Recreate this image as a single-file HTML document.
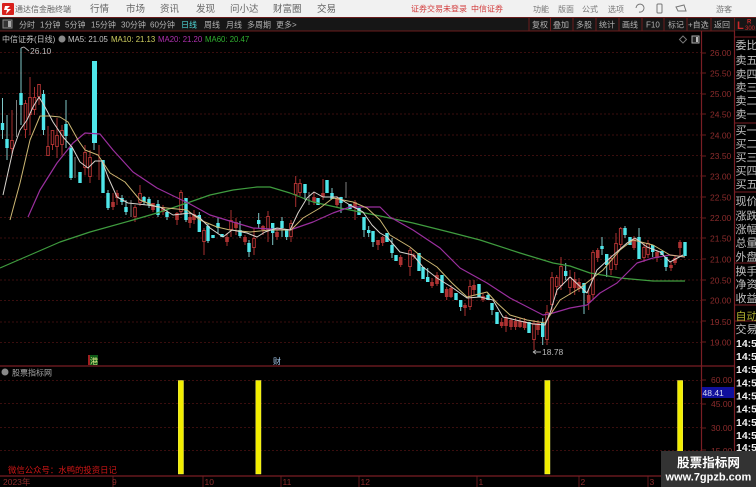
<!DOCTYPE html>
<html><head><meta charset="utf-8"><title>通达信金融终端</title>
<style>
html,body{margin:0;padding:0;background:#000;width:756px;height:487px;overflow:hidden}
svg{display:block;filter:blur(.35px)}
text{font-family:"Liberation Sans","Noto Sans CJK SC",sans-serif;white-space:pre}
.m{font-size:9.5px;fill:#666}
.s{font-size:8px;fill:#777}
.t{font-size:8px;fill:#b4b4b4}
.a{font-size:8.5px;fill:#8c2c2c}
.r{font-size:11px;fill:#c0c0c0}
.k{font-size:10.5px;fill:#f0f0f0;font-weight:bold}
</style></head><body>
<svg width="756" height="487" viewBox="0 0 756 487" xmlns="http://www.w3.org/2000/svg">
<rect width="756" height="487" fill="#000"/>
<!-- title bar -->
<rect width="756" height="17" fill="#f1f1f1"/>
<rect x="2" y="3" width="12" height="12" rx="1" fill="#d8201c"/>
<path d="M5 6l5 0-3 3 4 0-5 5 1-4-3 0z" fill="#fff"/>
<text x="15" y="12" class="s" style="fill:#666">通达信金融终端</text>
<g class="m"><text x="90" y="12">行情</text><text x="126" y="12">市场</text><text x="160" y="12">资讯</text><text x="196" y="12">发现</text><text x="230" y="12">问小达</text><text x="273" y="12">财富圈</text><text x="317" y="12">交易</text></g>
<text x="411" y="11.500" style="font-size:8px;fill:#d23c3c">证券交易未登录</text>
<text x="471" y="11.500" style="font-size:8px;fill:#d23c3c">中信证券</text>
<g class="s"><text x="533" y="12">功能</text><text x="558" y="12">版面</text><text x="582" y="12">公式</text><text x="608" y="12">选项</text><text x="716" y="12">游客</text></g>
<g fill="none" stroke="#777" stroke-width="1"><path d="M636 8a4 4 0 1 1 3 4"/><rect x="657" y="4" width="5" height="9" rx="1"/><path d="M676 7l8-2 2 6h-8z"/></g>
<!-- toolbar -->
<rect y="17" width="756" height="14" fill="#161616"/>
<path d="M0 17.500H756M0 31H735" stroke="#6a1c1c" stroke-width="1"/>
<rect x="3" y="20" width="9" height="8" fill="#333" stroke="#888"/><rect x="8" y="21" width="3" height="6" fill="#aaa"/>
<g class="t"><text x="19" y="27.500">分时</text><text x="40" y="27.500">1分钟</text><text x="65" y="27.500">5分钟</text><text x="91" y="27.500">15分钟</text><text x="121" y="27.500">30分钟</text><text x="150" y="27.500">60分钟</text><text x="181" y="27.500" style="fill:#4fd6d6">日线</text><text x="204" y="27.500">周线</text><text x="226" y="27.500">月线</text><text x="247" y="27.500">多周期</text><text x="276" y="27.500">更多</text><text x="292" y="27.500">&gt;</text>
<text x="532" y="27.500">复权</text><text x="553" y="27.500">叠加</text><text x="576" y="27.500">多股</text><text x="599" y="27.500">统计</text><text x="622" y="27.500">画线</text><text x="646" y="27.500">F10</text><text x="668" y="27.500">标记</text><text x="688" y="27.500">+自选</text><text x="714" y="27.500">返回</text></g>
<path d="M529 18V31M550.500 18V31M573 18V31M596 18V31M619 18V31M642 18V31M664 18V31M687 18V31M711 18V31M734.500 18V31" stroke="#6a1c1c"/>
<text x="737" y="29" style="font-size:11px;font-weight:bold;fill:#c92a2a">L</text>
<text x="747" y="23.500" style="font-size:6px;font-weight:bold;fill:#c92a2a">R</text>
<text x="745" y="30" style="font-size:6px;fill:#c92a2a">300</text>
<!-- grid -->
<g stroke="#3a0e0e" stroke-width="1" stroke-dasharray="2 2">
<path d="M0 52.500H701M0 73H701M0 93.500H701M0 114H701M0 135H701M0 155.500H701M0 176H701M0 197H701M0 217.500H701M0 238H701M0 259.500H701M0 280H701M0 300.500H701M0 322H701M0 342.500H701"/>
<path d="M0 380.500H701M0 403.500H701M0 427.500H701M0 450.500H701"/>
</g>
<!-- frame -->
<path d="M0 366H735M0 476H735M701.500 31V476M734.500 31V487" stroke="#7a1e24" stroke-width="1.200" fill="none"/>
<path d="M701 53H706M701 73H706M701 94H706M701 114H706M701 135H706M701 156H706M701 176H706M701 197H706M701 218H706M701 238H706M701 259H706M701 280H706M701 300H706M701 321H706M701 342H706M701 380H706M701 404H706M701 428H706M701 450H706" stroke="#6a1c1c"/>
<!-- candles: wicks -->
<path fill="none" stroke="#7e7e7e" stroke-width="1" d="M16.500 100V137M75 157V178M309 192V205M346 182V198M131 200V217"/>
<path fill="none" stroke="#a83030" stroke-width="1" d="M12 110V155M25.500 100V138M30 77V135M34.500 87V115M39 84V105M48 126V156M52.500 130V150M57 118V158M62 125V155M85 145V175M90 150V183M99 145V180M113 193V210M117 190V205M135 205V222M140 185V206M153 203V212M163 205V215M177 212V225M181 190V215M190 212V228M194 210V224M204 228V255M227 233V246M231 210V237M236 218V235M245 235V245M254 228V255M263 225V235M268 211V242M277 228V240M291 220V242M295.700 176V207M300 179V196M314 192V205M323 179V200M337 196V208M355 200V220M378 240V250M382.700 236V246M400.700 255V267M410 248V276M414 253V259M432 278V288M437 272V286M446.700 287V300M451 285V298M465 303V316M470 280V310M474 280V295M483 293V302M501.700 318V328M506 315V332M511 318V330M515.600 318V330M520 318V328M524.600 318V330M534 320V350M538 320V335M547 305V345M552 272V312M556.700 275V295M561 257V290M570 270V295M574.700 272V295M579 278V292M588.700 290V310M593 250V300M597.700 248V262M611 255V275M616 233V270M620.700 227V250M634 236V250M644 243V262M648 240V258M657 250V262M671 262V271M675 255V265M680 240V257"/>
<path fill="none" stroke="#7fc8c8" stroke-width="1" d="M2.500 98V139M7 115V160M21 48V125M43.500 90V135M66 100V148M71 145V180M80 172V183M94 61V150M103 160V193M108 190V210M122 195V205M126 200V215M144 196V205M149 197V208M158 200V217M167 210V220M186 198V222M199.300 212V232M208 224V243M213 235V238M218 218V233M222 234V237M240 221V238M249 240V257M258.700 213V228M272.700 223V245M282 217V237M286.700 229V240M305 184V200M318 198V205M327 180V193M332 188V199M341 197V213M350 204V209M359 208V215M364 217V237M368.700 226V237M373 231V247M387 233V242M392 238V258M396 255V261M419 253V271M423 267V279M427.700 268V282M442 275V293M456 293V300M460.700 300V311M479 284V297M488 293V300M492 303V315M497 312V324M529 322V333M542.700 318V345M565.700 263V280M584 283V314M602 237V255M606.700 254V277M625 226V238M630 237V245M639 228V259M652.700 245V257M662 251V255M666 257V271M685 242V256"/>
<!-- red bodies hollow -->
<path id="rb" fill="none" stroke="#ad3232" stroke-width="3.600" d="M12 140V149M25.500 103V130M30 97V115M34.500 97V110M39 84V97M48 146V156M52.500 130V145M57 135V147M62 130V145M85 152V168M90 157V177M113 202V207M117 193V198M135 207V217M140 193V203M153 203V210M163 207V212M177 213V220M181 192V212M190 217V223M194 214V220M204 230V242M227 237V242M231 220V230M236 222V228M245 237V242M254 238V248M263 226V230M268 216V230M277 232V237M291 223V237M295.700 183V195M300 183V193M314 197V202M323 193V197M337 198V205M355 202V208M378 240V245M382.700 237V243M400.700 257V265M410 250V267M414 255V257M432 282V286M437 275V284M446.700 289V297M451 288V297M465 305V308M470 286V307M474 285V290M483 296V300M501.700 322V326M506 317V326M511 320V327M515.600 321V327M520 321V327M524.600 321V328M534 323V340M538 323V330M547 312V340M552 277V305M556.700 277V287M561 266V286M570 277V288M574.700 279V288M579 282V289M588.700 295V303M593 252V295M597.700 250V258M611 258V270M616 243V265M620.700 228V245M634 239V248M644 247V258M648 243V255M657 252V258M671 265V268M675 258V263M680 242V248"/>
<path fill="none" stroke="#000" stroke-width="1.600" d="M12 141V148M25.500 104V129M30 98V114M34.500 98V109M39 85V96M48 147V155M52.500 131V144M57 136V146M62 131V144M85 153V167M90 158V176M135 208V216M140 194V202M181 193V211M204 231V241M231 221V229M254 239V247M268 217V229M291 224V236M295.700 184V194M300 184V192M410 251V266M470 287V306M534 324V339M547 313V339M552 278V304M556.700 278V286M561 267V285M570 278V287M593 253V294M611 259V269M616 244V264M620.700 229V244M644 248V257M648 244V254"/>
<!-- cyan bodies -->
<path fill="none" stroke="#4fe6ea" stroke-width="3.400" d="M2.500 123V130M7 139V148M21 93V105M43.500 94V130M66 124V136M71 148V178M80 172V183M103 160V193M108 193V208M122 198V202M126 207V212M144 197V202M149 199V205M158 204V215M167 212V217M186 198V220M199.300 215V232M208 226V241M213 235V238M218 223V228M222 234V237M240 230V236M249 243V252M258.700 220V224M272.700 223V233M282 221V228M286.700 229V237M305 184V193M318 198V205M327 180V193M332 193V199M341 197V203M350 204V209M359 208V215M364 217V230M368.700 230V233M373 231V242M387 233V242M392 245V253M396 255V261M419 253V271M423 267V279M427.700 277V282M442 275V293M456 293V300M460.700 300V307M479 284V297M488 295V300M492 303V310M497 312V324M529 322V333M542.700 323V337M565.700 271V276M584 283V293M602 246V249M606.700 254V265M625 228V235M630 237V245M639 237V259M652.700 245V252M662 251V255M666 257V267M685 242V256"/>
<rect x="92" y="61" width="5" height="82" fill="#4fe6ea"/>
<!-- MA lines -->
<g fill="none" stroke-width="1" stroke-linejoin="round">
<polyline stroke="#3f9c3f" stroke-width="1.200" points="0,268 30,255 60,242 90,232 133,220 157,213 190,202 210,195 233,190 257,187 270,187 290,193 313,202 340,208 380,216 413,223 453,233 480,240 520,253 553,263 570,266 590,273 620,278 653,281 685,281"/>
<polyline stroke="#9a2f9e" stroke-width="1.200" points="28,217 40,190 57,163 73,143 85,133 100,134 113,150 133,172 157,188 190,204 210,215 233,222 253,228 290,230 313,222 333,213 350,207 380,207 390,217 413,230 440,248 460,268 487,283 510,298 543,315 553,313 570,308 587,305 600,293 617,283 637,263 653,258 670,255 685,257"/>
<polyline stroke="#cdb874" points="10,220 20,183 30,140 40,116 50,116 60,117 68,122 78,140 85,150 98,155 110,173 125,182 140,200 157,207 187,210 200,220 217,227 230,230 250,232 270,230 291,230 303,218 320,208 333,198 353,202 367,208 380,220 390,235 410,247 423,258 437,267 452,283 467,297 487,292 497,303 510,315 527,320 545,323 560,300 580,288 603,270 620,250 633,240 653,245 670,255 685,257"/>
<polyline stroke="#d8d4ce" points="3,195 13,150 20,130 27,120 33,107 39,97 45,107 53,122 63,137 72,147 80,162 88,168 95,161 102,161 108,177 117,197 128,203 147,205 160,207 173,215 190,213 200,218 210,228 223,237 232,230 247,233 257,237 265,232 277,228 290,230 298,213 307,198 314,192 323,197 337,197 350,205 363,212 372,225 380,233 387,237 400,252 413,255 423,267 437,278 453,288 467,298 480,297 493,300 503,317 520,321 533,324 545,325 550,313 557,290 570,277 587,293 597,270 610,258 627,243 635,238 647,247 660,252 670,262 683,255"/>
</g>
<!-- info row -->
<text x="2" y="42" class="t" style="fill:#c0c0c0">中信证券(日线)</text>
<circle cx="62" cy="39" r="3.500" fill="#888"/>
<g style="font-size:7.800px"><text x="68" y="42" style="fill:#c8c8c8">MA5: 21.05</text><text x="111" y="42" style="fill:#cfcf60">MA10: 21.13</text><text x="158" y="42" style="fill:#b030b0">MA20: 21.20</text><text x="205" y="42" style="fill:#30b030">MA60: 20.47</text></g>
<path d="M683 36l3.500 3.500-3.500 3.500-3.500-3.500z" fill="none" stroke="#777"/>
<rect x="692" y="36" width="7" height="7" fill="#222" stroke="#aaa"/><rect x="696" y="37" width="2" height="5" fill="#bbb"/>
<path d="M21 48L24 47M24 47L29 51" stroke="#aaa" fill="none"/>
<text x="30" y="54" style="font-size:8.500px;fill:#b8b8b8">26.10</text>
<path d="M533 352H541M533 352l3-2M533 352l3 2" stroke="#aaa" fill="none"/>
<text x="542" y="355" style="font-size:8.500px;fill:#b8b8b8">18.78</text>
<!-- price axis -->
<g class="a"><text x="710" y="56">26.00</text><text x="710" y="76.500">25.50</text><text x="710" y="97">25.00</text><text x="710" y="117.500">24.50</text><text x="710" y="138.500">24.00</text><text x="710" y="159">23.50</text><text x="710" y="179.500">23.00</text><text x="710" y="200.500">22.50</text><text x="710" y="221">22.00</text><text x="710" y="241.500">21.50</text><text x="710" y="262.500">21.00</text><text x="710" y="283.500">20.50</text><text x="710" y="303.500">20.00</text><text x="710" y="325">19.50</text><text x="710" y="345.500">19.00</text><text x="711" y="383">60.00</text><text x="711" y="407">45.00</text><text x="711" y="431">30.00</text><text x="711" y="454">15.00</text></g>
<rect x="702" y="387" width="32" height="11" fill="#10109c"/>
<text x="702.500" y="396" style="font-size:8.500px;fill:#d8d8f0">48.41</text>
<!-- markers -->
<rect x="88" y="355" width="2.500" height="10" fill="#a02020"/>
<rect x="90" y="355" width="8" height="10" fill="#0e5a16"/>
<text x="90" y="364" style="font-size:8px;fill:#dfe88a">港</text>
<text x="273" y="364" style="font-size:8px;fill:#a8cdf0">财</text>
<!-- sub chart -->
<circle cx="5" cy="372" r="3.500" fill="#888"/>
<text x="12" y="375.500" style="font-size:8px;fill:#aaa">股票指标网</text>
<g fill="#f2ee00" stroke="#fffe70" stroke-width=".4"><rect x="178.200" y="380.500" width="5.300" height="93.500"/><rect x="255.700" y="380.500" width="5.300" height="93.500"/><rect x="544.700" y="380.500" width="5.300" height="93.500"/><rect x="677.500" y="380.500" width="5.300" height="93.500"/></g>
<text x="8" y="473" style="font-size:8.400px;fill:#d01616">微信公众号：水鸭的投资日记</text>
<!-- time axis -->
<path d="M113 476V487M203 476V487M281 476V487M359 476V487M477 476V487M579 476V487M648 476V487" stroke="#7a1e24" stroke-width=".8"/>
<g class="a" style="font-size:8.500px"><text x="3" y="485">2023年</text><text x="112" y="485">9</text><text x="204.500" y="485">10</text><text x="282.500" y="485">11</text><text x="360.500" y="485">12</text><text x="478.500" y="485">1</text><text x="580.500" y="485">2</text><text x="649.500" y="485">3</text></g>
<!-- right panel -->
<path d="M735 37H756M735 123H756M735 192H756M735 263H756M735 305H756M735 321H756" stroke="#7a1e24"/>
<g class="r"><text x="735.500" y="49">委比</text><text x="735.500" y="64">卖五</text><text x="735.500" y="78">卖四</text><text x="735.500" y="91">卖三</text><text x="735.500" y="104.500">卖二</text><text x="735.500" y="118">卖一</text><text x="735.500" y="134">买一</text><text x="735.500" y="147.500">买二</text><text x="735.500" y="161">买三</text><text x="735.500" y="174.500">买四</text><text x="735.500" y="188">买五</text><text x="735.500" y="205">现价</text><text x="735.500" y="219.500">涨跌</text><text x="735.500" y="233">涨幅</text><text x="735.500" y="246.500">总量</text><text x="735.500" y="260.500">外盘</text><text x="735.500" y="275">换手</text><text x="735.500" y="288">净资</text><text x="735.500" y="302">收益</text><text x="735.500" y="320" style="fill:#b0b030">自动</text><text x="735.500" y="333">交易</text></g>
<g class="k"><text x="736" y="347">14:50</text><text x="736" y="360">14:50</text><text x="736" y="373">14:50</text><text x="736" y="386.500">14:50</text><text x="736" y="399.500">14:50</text><text x="736" y="412.500">14:50</text><text x="736" y="426">14:50</text><text x="736" y="439">14:50</text><text x="736" y="451">14:50</text></g>
<!-- watermark -->
<rect x="661" y="451" width="95" height="36" fill="#333"/>
<text x="677" y="467" style="font-size:12.600px;font-weight:bold;fill:#fff">股票指标网</text>
<text x="665.500" y="480.500" style="font-size:11px;font-weight:bold;fill:#fff">www.7gpzb.com</text>
</svg>
</body></html>
